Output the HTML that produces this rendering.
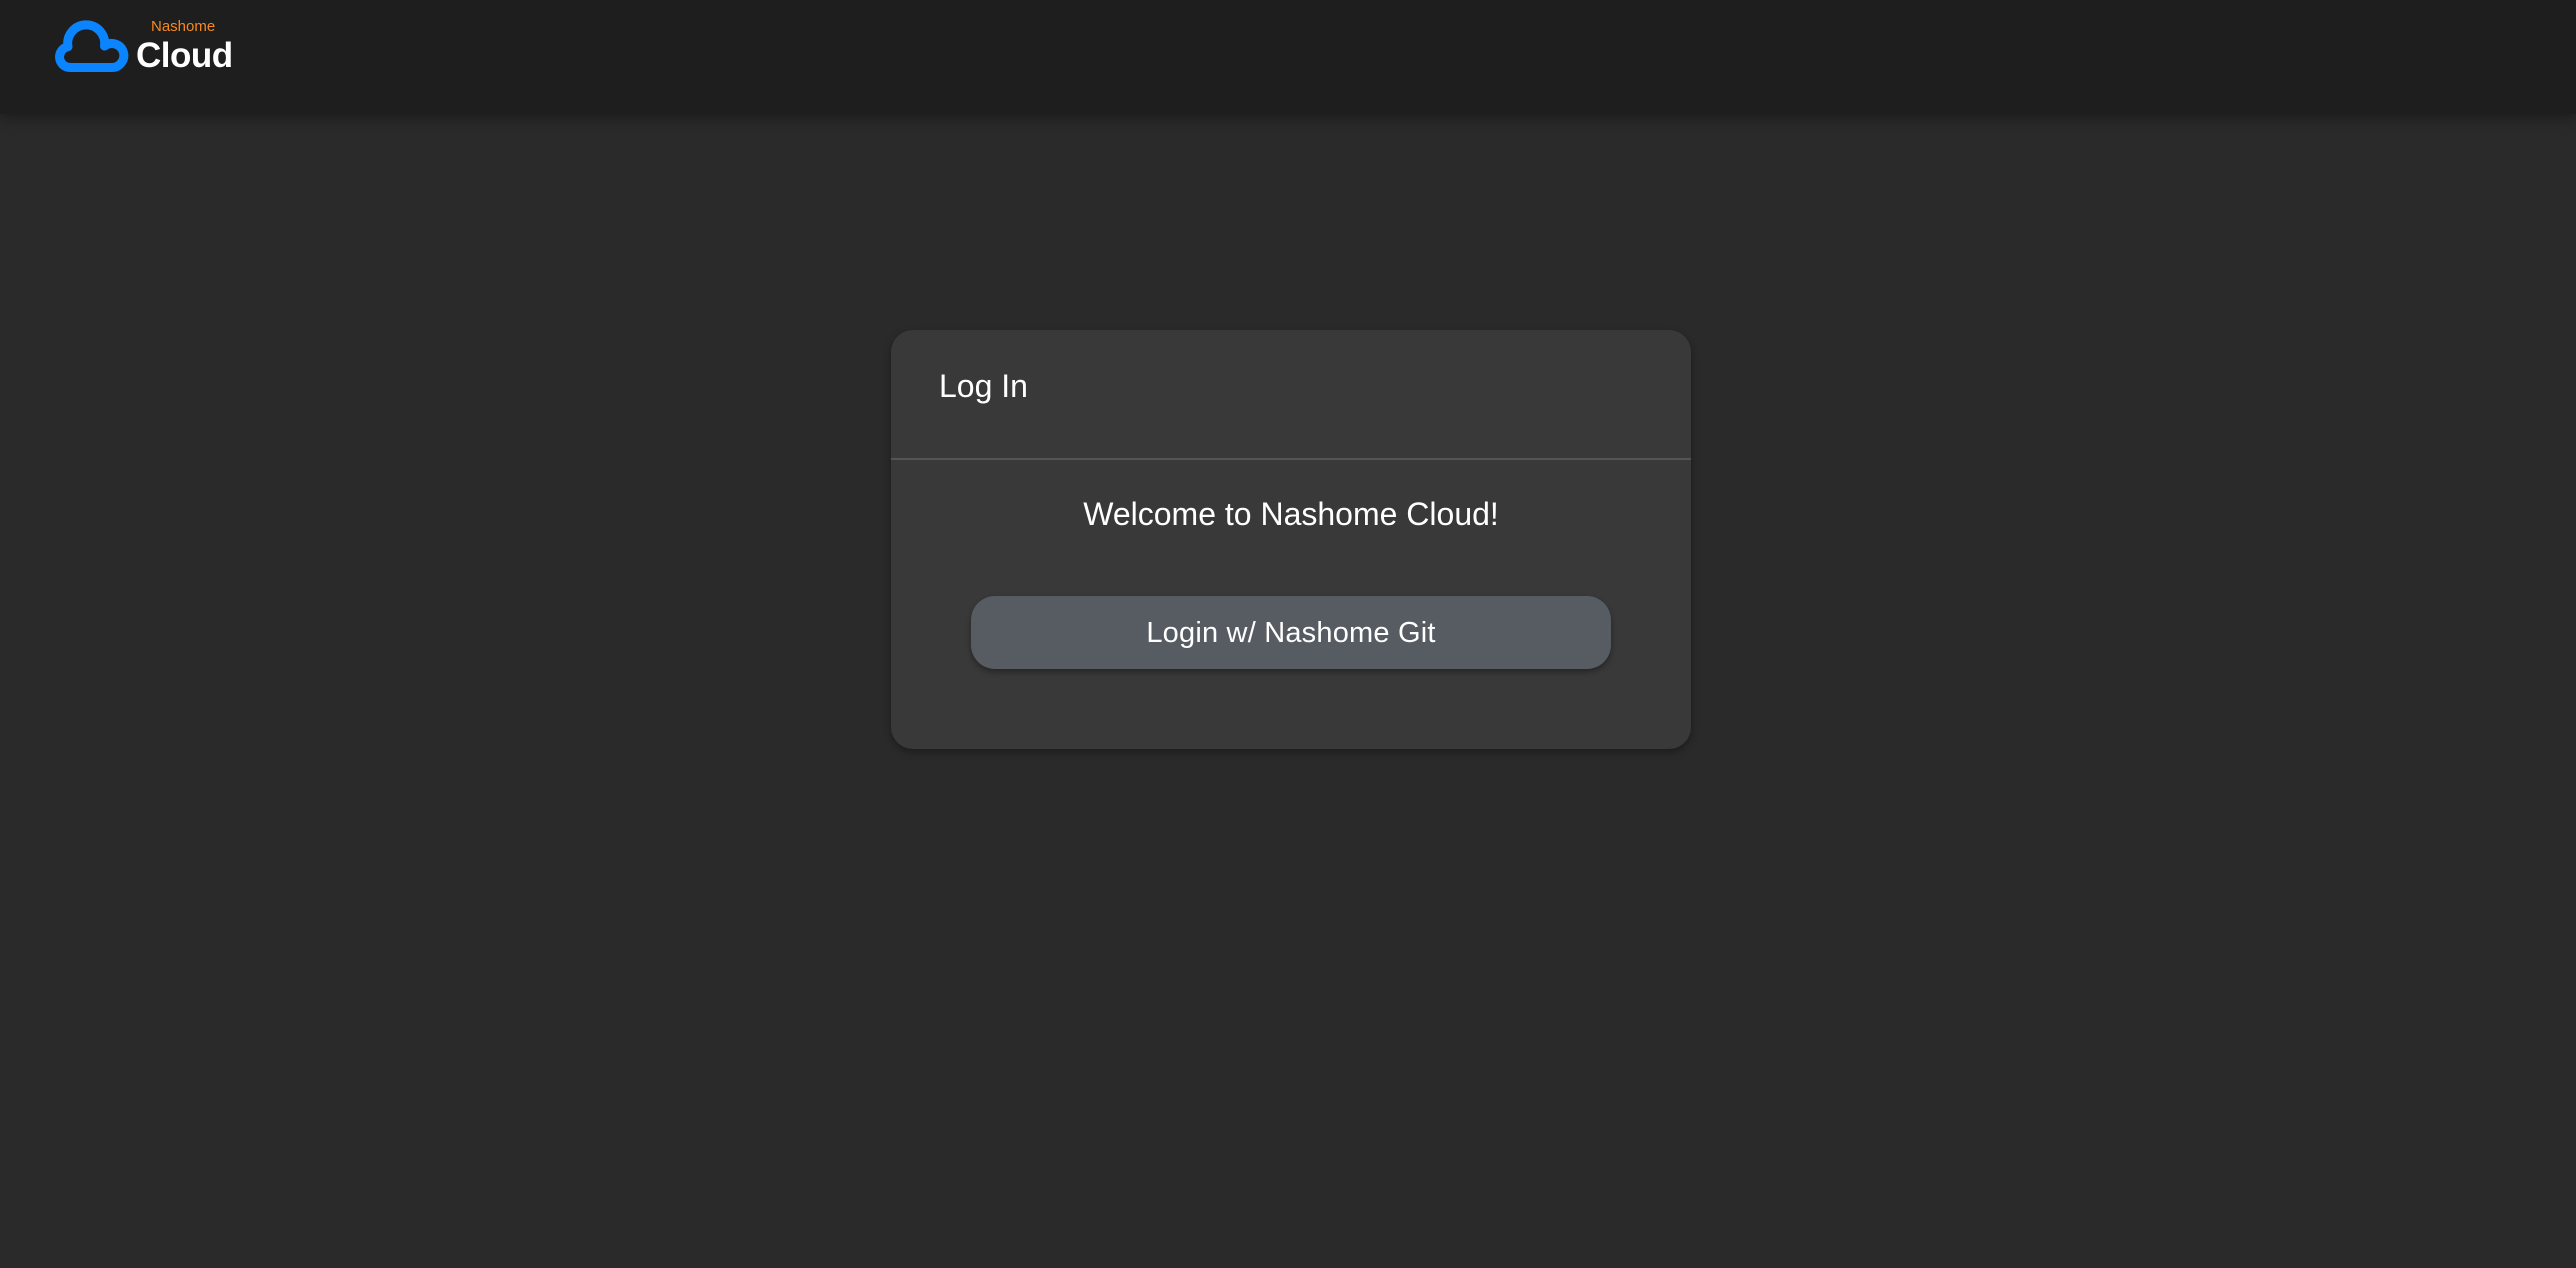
<!DOCTYPE html>
<html><head><style>
html,body{margin:0;padding:0;width:2576px;height:1268px;background:#2a2a2a;overflow:hidden;font-family:"Liberation Sans",Arial,sans-serif}
.hdr{position:absolute;left:0;top:0;width:2576px;height:114px;background:#1e1e1e;box-shadow:0 4px 14px rgba(0,0,0,0.35)}
.nh{position:absolute;left:151px;top:18px;font-size:15px;color:#f5891f}
.cl{position:absolute;left:136px;top:36px;font-size:35px;font-weight:bold;color:#fff;letter-spacing:-0.5px}
.card{position:absolute;left:891px;top:330px;width:800px;height:419px;background:#393939;border-radius:22px;box-shadow:0 3px 8px rgba(0,0,0,0.35)}
.login{position:absolute;left:48px;top:38px;font-size:32px;color:#fff}
.div{position:absolute;left:0;top:128px;width:800px;height:2px;background:#555}
.wel{position:absolute;left:0;width:800px;top:166px;text-align:center;font-size:32px;color:#fff}
.btn{position:absolute;left:80px;top:266px;width:640px;height:73px;border-radius:24px;background:#575b62;box-shadow:0 3px 6px rgba(0,0,0,0.35);color:#fff;font-size:29px;text-align:center;line-height:75px;letter-spacing:0.2px}
</style></head><body>
<div class="hdr">
<svg style="position:absolute;left:0;top:0" width="140" height="100" viewBox="0 0 140 100">
<path d="M70,67.5 A10.5,10.5 0 0 1 68,46.7 A18.5,18.5 0 1 1 104.5,46 A12,12 0 1 1 111.5,67.5 Z" fill="none" stroke="#0a84ff" stroke-width="9" stroke-linejoin="round"/>
</svg>
<div class="nh">Nashome</div>
<div class="cl">Cloud</div>
</div>
<div class="card">
<div class="login">Log In</div>
<div class="div"></div>
<div class="wel">Welcome to Nashome Cloud!</div>
<div class="btn">Login w/ Nashome Git</div>
</div>
</body></html>
